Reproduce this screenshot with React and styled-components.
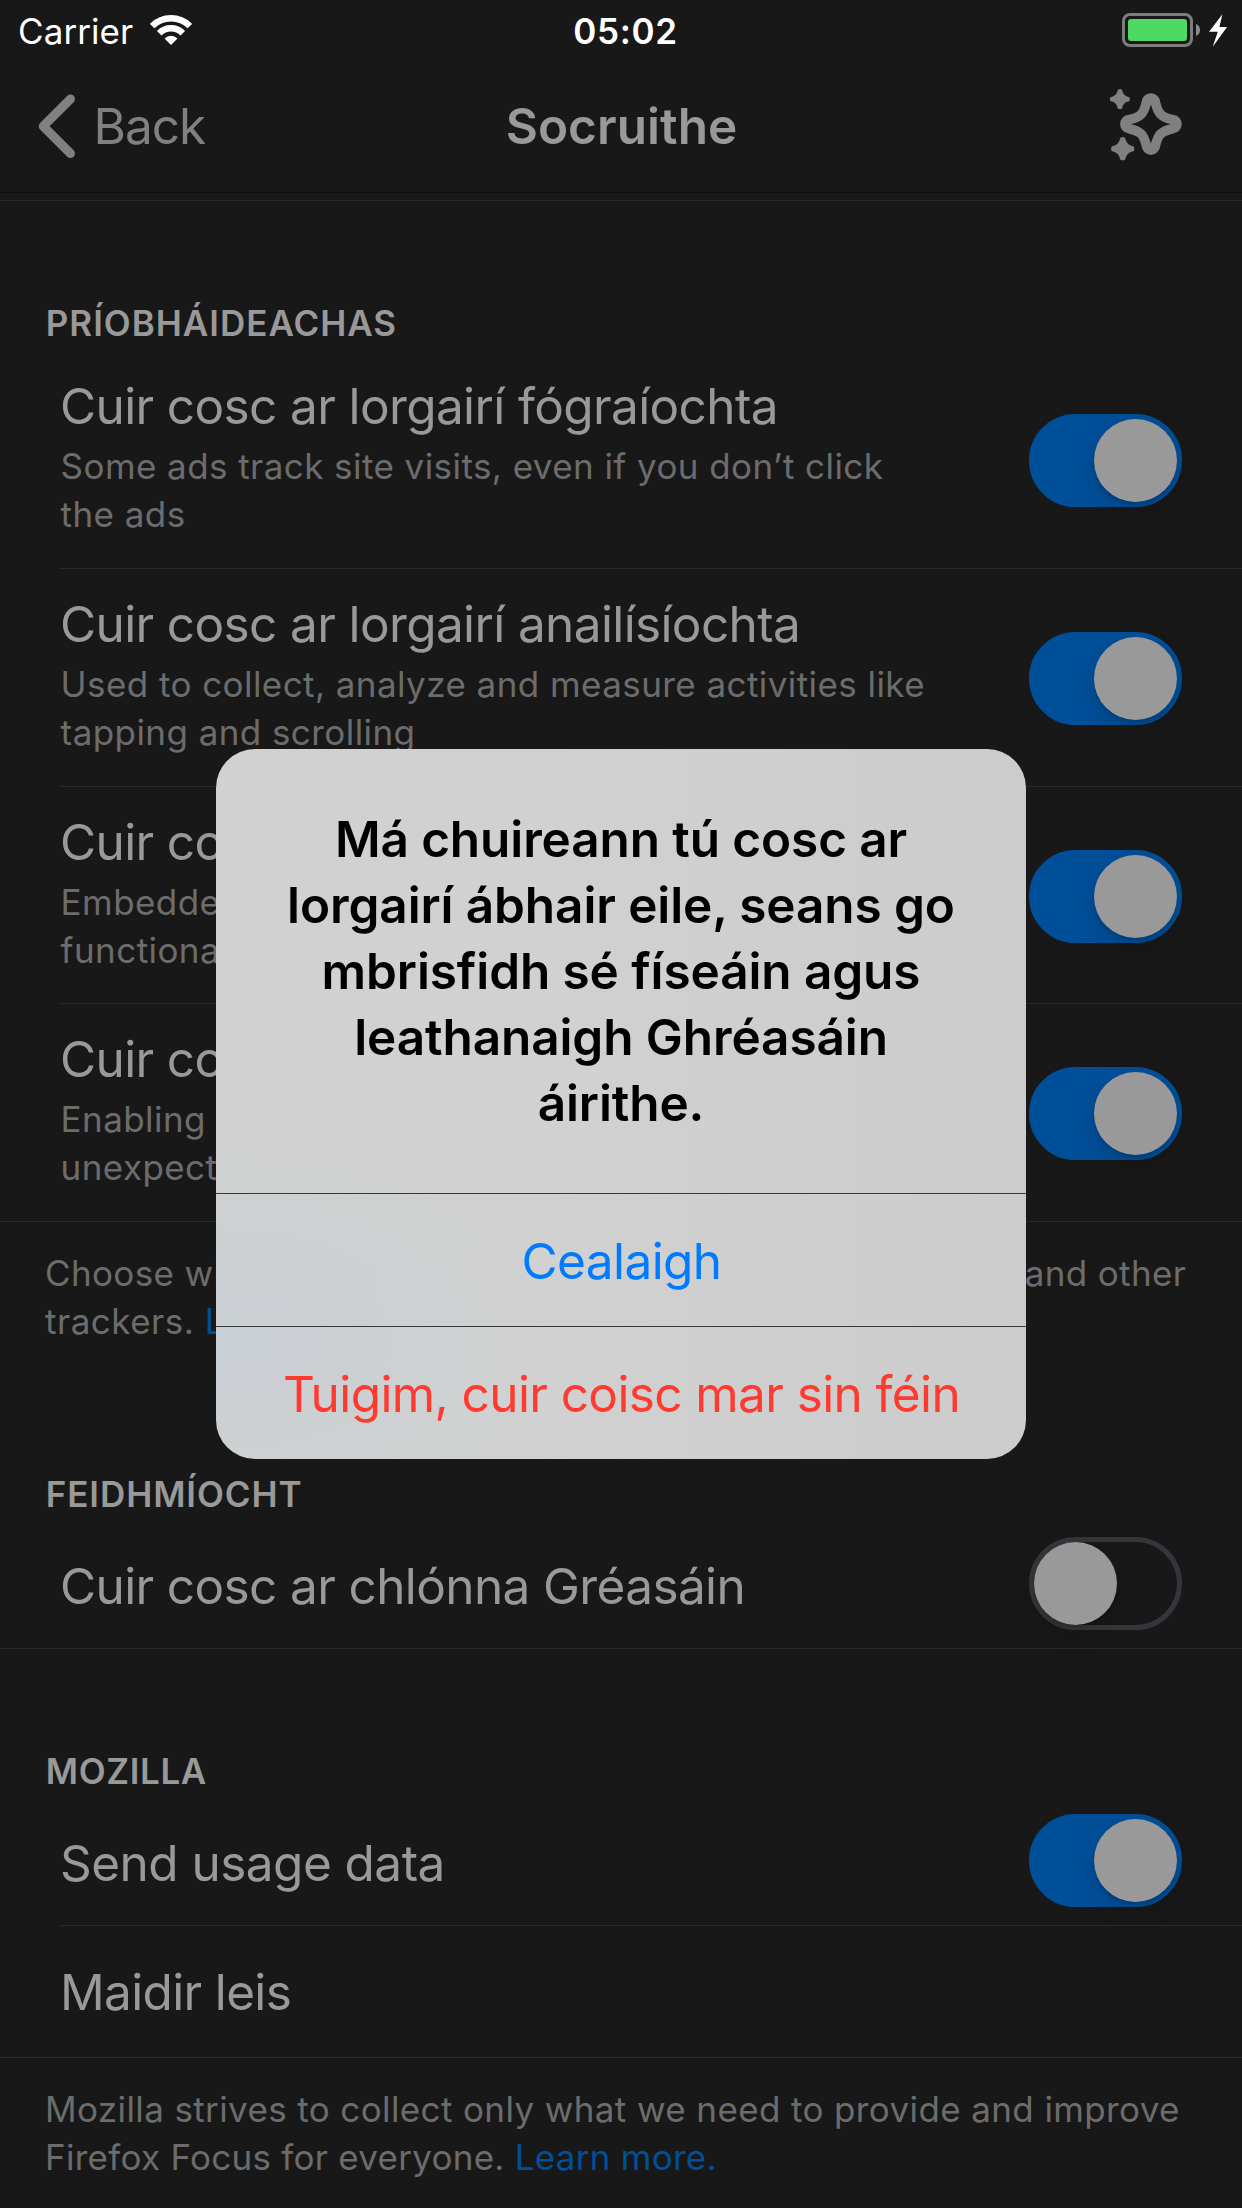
import React from "react";
import styled, { createGlobalStyle } from "styled-components";

const GlobalStyle = createGlobalStyle`
  html, body {
    margin: 0;
    background: #181818;
  }
  *, *::before, *::after {
    box-sizing: border-box;
  }
`;

const Screen = styled.div`
  position: relative;
  display: flex;
  flex-direction: column;
  width: 1242px;
  height: 2208px;
  overflow: hidden;
  background: #181818;
  color: #999999;
  font-family: Inter, Roboto, "Liberation Sans", sans-serif;
  font-size: 49.5px;
  font-weight: 400;
`;

const StatusBar = styled.header`
  display: grid;
  grid-template-columns: 1fr auto 1fr;
  height: 60px;
  padding: 0 14px 0 18px;
  color: #ffffff;
  font-size: 35px;
  line-height: 62px;
`;

const StatusLeft = styled.div`
  display: flex;
  align-items: flex-start;
`;

const Carrier = styled.span`
  width: 132px;
  white-space: nowrap;
  letter-spacing: 0.08px;
`;

const WifiIcon = styled.svg`
  width: 42px;
  height: 30px;
  margin-top: 15px;
`;

const Clock = styled.time`
  padding-left: 5px;
  font-weight: 600;
  letter-spacing: 0.66px;
`;

const StatusRight = styled.div`
  display: flex;
  justify-content: flex-end;
  align-items: flex-start;
`;

const BatteryIcon = styled.svg`
  width: 107px;
  height: 36px;
  margin-top: 12px;
`;

const NavBar = styled.nav`
  display: grid;
  grid-template-columns: 1fr auto 1fr;
  align-items: center;
  height: 133px;
  padding: 0 58px 0 38px;
  border-bottom: 1px solid #101010;
  line-height: 66px;
`;

const BackButton = styled.div`
  display: flex;
  align-items: center;
  gap: 15.5px;
  color: #808080;
  letter-spacing: -1px;
`;

const ChevronIcon = styled.svg`
  width: 40px;
  height: 66px;
`;

const NavTitle = styled.h1`
  margin: 0;
  padding-left: 21px;
  font-size: inherit;
  font-weight: 600;
  letter-spacing: 0.05px;
`;

const SparkleIcon = styled.svg`
  justify-self: end;
  width: 76px;
  height: 76px;
  margin-bottom: 1px;
  color: #808080;
`;

const Settings = styled.main`
  display: flex;
  flex-direction: column;
  margin-top: 7px;
  border-top: 1px solid #292929;
`;

const Section = styled.section`
  display: flex;
  flex-direction: column;
  padding-top: 98px;
`;

const SectionTitle = styled.h2`
  margin: 0 0 4px;
  padding-left: 45.8px;
  font-size: 35px;
  font-weight: 600;
  line-height: 48px;
  letter-spacing: ${(p) => p.$tracking ?? 0.98}px;
`;

const Row = styled.div`
  display: flex;
  justify-content: space-between;
  align-items: flex-start;
  height: ${(p) => p.$height}px;
  margin-left: ${(p) => (p.$last ? 0 : 60)}px;
  padding: 0 60px 0 ${(p) => (p.$last ? 60 : 0)}px;
  border-bottom: 1px solid #292929;
`;

const RowText = styled.div`
  display: flex;
  flex-direction: column;
  gap: 6px;
  padding-top: ${(p) => p.$top}px;
  white-space: nowrap;
`;

const RowTitle = styled.div`
  line-height: 60px;
  letter-spacing: ${(p) => p.$tracking ?? -0.62}px;
`;

const RowDetail = styled.div`
  padding-left: 0.6px;
  color: #6c6c6c;
  font-size: 35px;
  line-height: 48px;
  letter-spacing: 0.43px;
`;

const Toggle = styled.div`
  display: flex;
  flex: none;
  justify-content: ${(p) => (p.$on ? "flex-end" : "flex-start")};
  width: 153px;
  height: 93px;
  margin-top: ${(p) => p.$top}px;
  border: 5px solid ${(p) => (p.$on ? "#004f99" : "#33373b")};
  border-radius: 47px;
  background: ${(p) => (p.$on ? "#004f99" : "#181818")};
`;

const Knob = styled.div`
  width: 83px;
  height: 83px;
  border-radius: 50%;
  background: #999999;
  box-shadow: 0 9px 22px rgba(0, 0, 0, 0.15), 0 3px 3px rgba(0, 0, 0, 0.1);
`;

const Footnote = styled.p`
  margin: 0;
  padding: 27px 0 27px 45px;
  color: #6c6c6c;
  font-size: 35px;
  line-height: 48px;
  letter-spacing: ${(p) => p.$tracking}px;
  white-space: nowrap;
`;

const FootnoteEnd = styled.span`
  letter-spacing: ${(p) => p.$tracking}px;
`;

const Link = styled.a`
  color: #004f99;
  letter-spacing: 0.25px;
`;

const Backdrop = styled.div`
  position: absolute;
  inset: 0;
  display: flex;
  align-items: center;
  justify-content: center;
`;

const Alert = styled.div`
  display: flex;
  flex-direction: column;
  width: 810px;
  height: 710px;
  overflow: hidden;
  border-radius: 39px;
  background:
    radial-gradient(ellipse 320px 190px at 2% 83%, #cacfd4 0%, rgba(202, 207, 212, 0) 100%),
    linear-gradient(90deg, #d0d1d0 0%, #d1d1d1 40%, #cccccc 100%);
`;

const AlertTitle = styled.div`
  height: 444px;
  padding-top: 57px;
  color: #000000;
  font-weight: 600;
  line-height: 66px;
  letter-spacing: -0.1px;
  text-align: center;
`;

const AlertAction = styled.div`
  height: 133px;
  padding-left: 1px;
  border-top: 1px solid #35393a;
  color: ${(p) => (p.$destructive ? "#ff3b30" : "#007aff")};
  line-height: 134px;
  letter-spacing: -0.6px;
  text-align: center;
`;

const SMALL_STAR =
  "M-1-8.7H1C2-4 4-2 8.7-1V1C4 2 2 4 1 8.7H-1C-2 4-4 2-8.7 1V-1C-4-2-2-4-1-8.7Z";

const trackers = [
  {
    title: "Cuir cosc ar lorgairí fógraíochta",
    detail: ["Some ads track site visits, even if you don’t click", "the ads"],
    height: 218,
  },
  {
    title: "Cuir cosc ar lorgairí anailísíochta",
    detail: ["Used to collect, analyze and measure activities like", "tapping and scrolling"],
    height: 218,
  },
  {
    title: "Cuir cosc ar lorgairí sóisialta",
    detail: ["Embedded on sites to track your visits and to display", "functionality like share buttons"],
    height: 217,
  },
  {
    title: "Cuir cosc ar lorgairí ábhair eile",
    detail: ["Enabling this may cause some pages to behave", "unexpectedly"],
    height: 218,
  },
];

function Switch({ on, top }) {
  return (
    <Toggle $on={on} $top={top} role="switch" aria-checked={on}>
      <Knob />
    </Toggle>
  );
}

function Wifi() {
  return (
    <WifiIcon viewBox="0 0 42 30" fill="none" stroke="#fff" strokeWidth="6.4">
      <path d="M2.1 11.1a26.75 26.75 0 0 1 37.8 0" />
      <path d="M9.2 18.2a16.7 16.7 0 0 1 23.6 0" />
      <path d="M21 30l-6.5-6.5a9.2 9.2 0 0 1 13 0z" fill="#fff" stroke="none" />
    </WifiIcon>
  );
}

function Battery() {
  return (
    <BatteryIcon viewBox="0 0 107 36">
      <rect x="2.5" y="2.5" width="68" height="31" rx="6.5" fill="none" stroke="#7d7d7d" strokeWidth="3" />
      <rect x="7" y="7" width="59" height="22" rx="3" fill="#4cd964" />
      <path d="M75 12c5.300 1.500 5.300 10.500 0 12z" fill="#8b8b8b" />
      <path d="M101.400 2.300L88 19.800h8.800L91.700 34.700L106.100 15h-7.700z" fill="#fff" />
    </BatteryIcon>
  );
}

function Sparkles() {
  return (
    <SparkleIcon viewBox="0 0 76 76" fill="none">
      <path
        transform="translate(42.900 36.100)"
        stroke="currentColor"
        strokeWidth="9.600"
        d="M4.300-22.500C5.300-18 6.300-13.300 9.800-9.800S18-5.300 22.500-4.300A4.380 4.380 0 0 1 22.500 4.300C18 5.300 13.300 6.300 9.800 9.800S5.300 18 4.300 22.500A4.380 4.380 0 0 1-4.300 22.500C-5.300 18-6.300 13.300-9.800 9.800S-18 5.300-22.500 4.300A4.380 4.380 0 0 1-22.500-4.300C-18-5.300-13.300-6.300-9.800-9.800S-5.300-18-4.300-22.500A4.380 4.380 0 0 1 4.300-22.500Z"
      />
      <g fill="currentColor" stroke="currentColor" strokeWidth="2.4" strokeLinejoin="round">
        <path transform="translate(11.900 11.200)" d={SMALL_STAR} />
        <path transform="translate(14.700 60.800) scale(1.160)" d={SMALL_STAR} />
      </g>
    </SparkleIcon>
  );
}

export default function App() {
  return (
    <>
      <GlobalStyle />
      <Screen>
        <StatusBar>
          <StatusLeft>
            <Carrier>Carrier</Carrier>
            <Wifi />
          </StatusLeft>
          <Clock>05:02</Clock>
          <StatusRight>
            <Battery />
          </StatusRight>
        </StatusBar>

        <NavBar>
          <BackButton>
            <ChevronIcon viewBox="0 0 40 66" fill="none" stroke="currentColor" strokeWidth="9" strokeLinecap="round" strokeLinejoin="round">
              <path d="M32.500 6L5.200 33.300L32.500 60.500" />
            </ChevronIcon>
            Back
          </BackButton>
          <NavTitle>Socruithe</NavTitle>
          <Sparkles />
        </NavBar>

        <Settings>
          <Section>
            <SectionTitle>PRÍOBHÁIDEACHAS</SectionTitle>
            {trackers.map((t, i) => (
              <Row key={t.title} $height={t.height} $last={i === trackers.length - 1}>
                <RowText $top={25}>
                  <RowTitle>{t.title}</RowTitle>
                  <RowDetail>
                    {t.detail[0]}
                    <br />
                    {t.detail[1]}
                  </RowDetail>
                </RowText>
                <Switch on top={63} />
              </Row>
            ))}
            <Footnote $tracking={0.36}>
              Choose whether Firefox Focus blocks ad, analytic, social, and other
              <br />
              <FootnoteEnd $tracking={0.5}>trackers. </FootnoteEnd>
              <Link>Learn more.</Link>
            </Footnote>
          </Section>

          <Section>
            <SectionTitle $tracking={0.9}>FEIDHMÍOCHT</SectionTitle>
            <Row $height={127} $last>
              <RowText $top={34}>
                <RowTitle>Cuir cosc ar chlónna Gréasáin</RowTitle>
              </RowText>
              <Switch on={false} top={15} />
            </Row>
          </Section>

          <Section>
            <SectionTitle $tracking={0.62}>MOZILLA</SectionTitle>
            <Row $height={127}>
              <RowText $top={34}>
                <RowTitle $tracking={-0.53}>Send usage data</RowTitle>
              </RowText>
              <Switch on top={15} />
            </Row>
            <Row $height={132} $last>
              <RowText $top={36}>
                <RowTitle $tracking={-0.65}>Maidir leis</RowTitle>
              </RowText>
            </Row>
            <Footnote $tracking={0.38}>
              Mozilla strives to collect only what we need to provide and improve
              <br />
              <FootnoteEnd $tracking={0.27}>Firefox Focus for everyone. </FootnoteEnd>
              <Link>Learn more.</Link>
            </Footnote>
          </Section>
        </Settings>

        <Backdrop>
          <Alert role="alertdialog">
            <AlertTitle>
              Má chuireann tú cosc ar
              <br />
              lorgairí ábhair eile, seans go
              <br />
              mbrisfidh sé físeáin agus
              <br />
              leathanaigh Ghréasáin
              <br />
              áirithe.
            </AlertTitle>
            <AlertAction>Cealaigh</AlertAction>
            <AlertAction $destructive>Tuigim, cuir coisc mar sin féin</AlertAction>
          </Alert>
        </Backdrop>
      </Screen>
    </>
  );
}
